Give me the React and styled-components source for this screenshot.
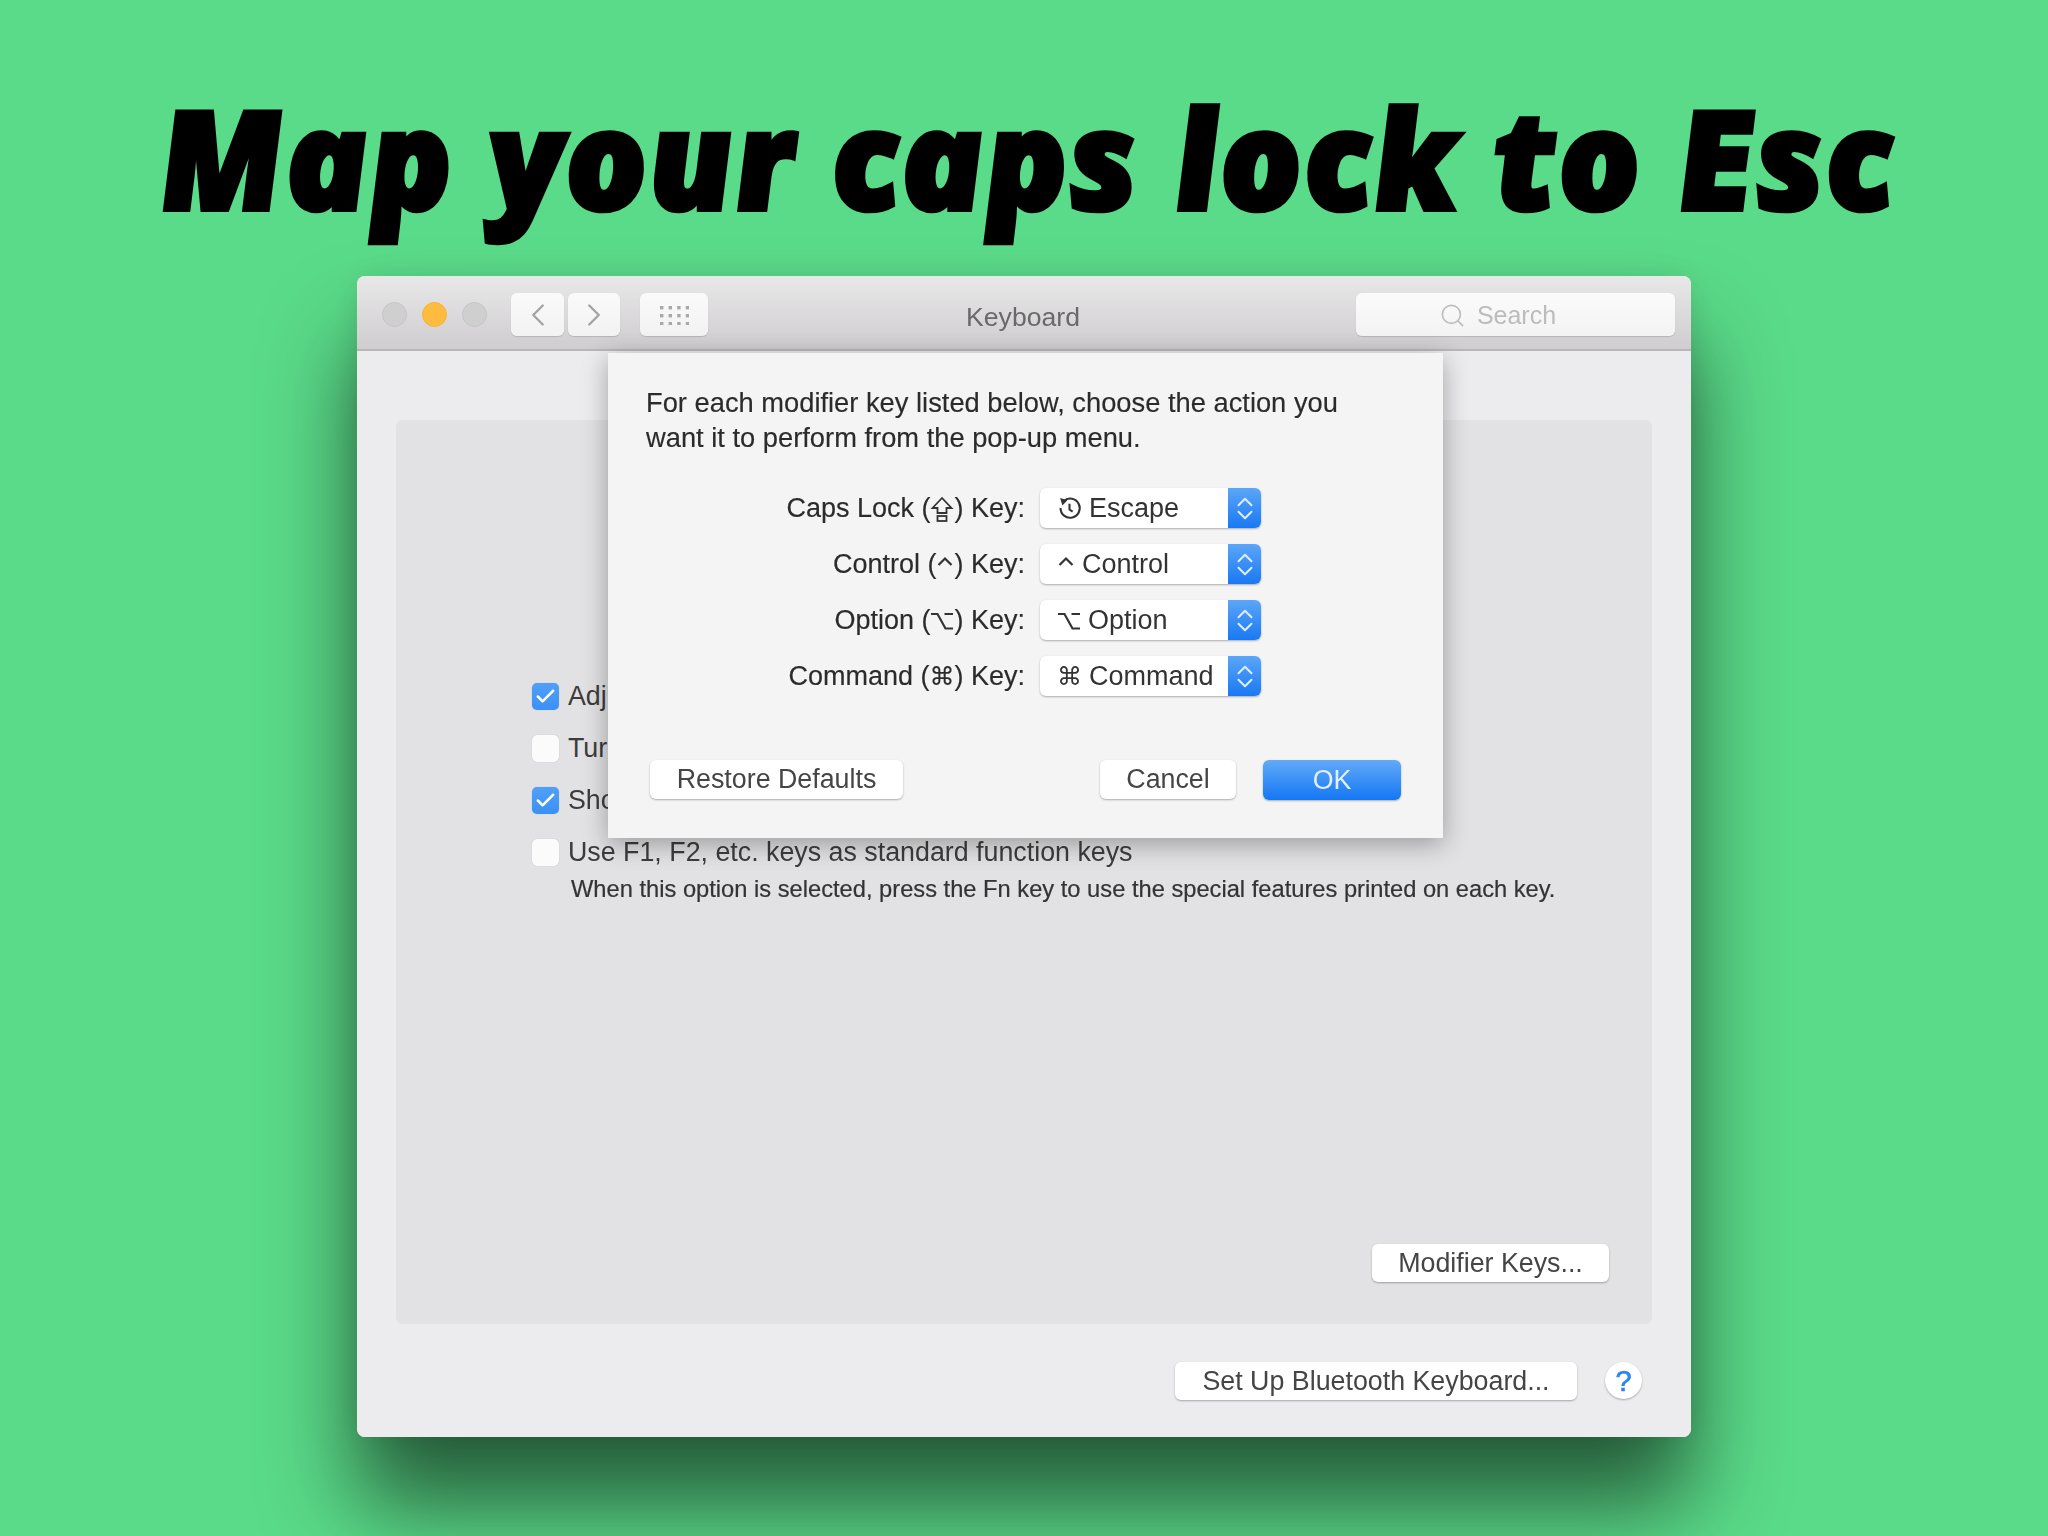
import React from "react";
import styled, { createGlobalStyle } from "styled-components";
import { ChevronLeft, ChevronRight, ChevronUp, ChevronDown, Search, Check } from "lucide-react";

const GlobalStyle = createGlobalStyle`
  html, body { margin: 0; padding: 0; background: #5adb89; }
  * { box-sizing: border-box; }
`;

const Page = styled.div`
  width: 2048px;
  height: 1536px;
  overflow: hidden;
  background: #5adb89;
  display: flex;
  flex-direction: column;
  align-items: flex-start;
  font-family: "Liberation Sans", Arial, sans-serif;
`;

const Title = styled.h1`
  margin: 0;
  width: 2048px;
  height: 276px;
  padding-top: 67px;
  text-align: center;
  color: #000;
  font-family: "Open Sans", sans-serif;
  font-weight: 800;
  font-style: italic;
  font-size: 138px;
  line-height: 178px;
  letter-spacing: 0.2px;
  -webkit-text-stroke: 4px #000;
  white-space: nowrap;
  transform: skewX(5deg);
`;

const Window = styled.div`
  position: relative;
  margin-left: 357px;
  width: 1334px;
  height: 1161px;
  border-radius: 8px;
  display: flex;
  flex-direction: column;
  background: #ededee;
  box-shadow: 0 68px 90px rgba(0, 0, 0, 0.58), 0 0 30px rgba(0, 0, 0, 0.1);
  filter: blur(0.5px);
`;

const TitleBar = styled.div`
  position: relative;
  height: 75px;
  flex: none;
  display: flex;
  align-items: center;
  padding: 4px 16px 0 25px;
  border-radius: 8px 8px 0 0;
  background: linear-gradient(#e9e8e9, #cfcdcf);
  border-bottom: 2px solid #b9b7b9;
`;

const Light = styled.span`
  width: 25px;
  height: 25px;
  border-radius: 50%;
  margin-right: 15px;
  background: ${(p) => (p.$on ? "#fdbc40" : "#d0cfd0")};
  border: 1px solid ${(p) => (p.$on ? "#f5b435" : "#c6c5c6")};
`;

const ToolButton = styled.div`
  height: 43px;
  width: ${(p) => p.$w}px;
  margin-left: ${(p) => p.$ml}px;
  border-radius: 6px;
  display: flex;
  align-items: center;
  justify-content: center;
  color: #a3a3a3;
  background: linear-gradient(#fafafa, #f2f2f3);
  box-shadow: 0 1px 1px rgba(0, 0, 0, 0.14);
`;

const WindowName = styled.div`
  position: absolute;
  left: 0;
  right: 0;
  top: 23px;
  padding-right: 2px;
  text-align: center;
  color: #6a696a;
  font-size: 26.6px;
  line-height: 36px;
`;

const SearchField = styled.div`
  margin-left: auto;
  width: 319px;
  height: 43px;
  padding-top: 1px;
  border-radius: 6px;
  display: flex;
  align-items: center;
  justify-content: center;
  gap: 11px;
  padding-right: 36px;
  color: #bdbcbd;
  font-size: 25px;
  background: linear-gradient(#fbfbfb, #f3f3f4);
  box-shadow: 0 1px 1px rgba(0, 0, 0, 0.14);
`;

const Body = styled.div`
  flex: 1;
  display: flex;
  flex-direction: column;
  padding: 69px 39px 0;
  border-radius: 0 0 8px 8px;
  background: #ecebed;
`;

const Panel = styled.div`
  flex: 1;
  display: flex;
  flex-direction: column;
  padding: 262px 43px 42px 136px;
  border-radius: 6px;
  background: #e2e1e3;
`;

const OptionRow = styled.div`
  display: flex;
  align-items: center;
  gap: 9px;
  height: 28px;
  margin-bottom: 24px;
  color: #3c3c3c;
  font-size: 26.8px;
  white-space: nowrap;
`;

const Box = styled.span`
  width: 27px;
  height: 27px;
  flex: none;
  border-radius: 5px;
  display: flex;
  align-items: center;
  justify-content: center;
  color: #fff;
  background: ${(p) => (p.$checked ? "linear-gradient(#50a0f8, #3a90f6)" : "#fbfbfb")};
  box-shadow: 0 0 1px rgba(0, 0, 0, 0.25);
`;

const OptionNote = styled.div`
  margin: -15px 0 0 39px;
  color: #333;
  font-size: 23.7px;
  line-height: 28px;
  white-space: nowrap;
  -webkit-text-stroke: 0.2px #333;
`;

const PushButton = styled.button`
  height: ${(p) => p.$h || 38}px;
  width: ${(p) => p.$w}px;
  padding: 0;
  border: 0;
  border-radius: 6px;
  color: #454545;
  font-family: inherit;
  font-size: 26.8px;
  background: #fff;
  box-shadow: 0 1px 2px rgba(0, 0, 0, 0.3);
`;

const DefaultButton = styled(PushButton)`
  color: #e4effd;
  background: linear-gradient(#62aaf9, #1477f3);
`;

const ModifierRow = styled.div`
  margin-top: auto;
  display: flex;
  justify-content: flex-end;
`;

const BottomRow = styled.div`
  flex: none;
  height: 113px;
  padding: 38px 10px 0 0;
  display: flex;
  justify-content: flex-end;
  align-items: flex-start;
`;

const HelpButton = styled.div`
  width: 37px;
  height: 37px;
  margin-left: 28px;
  padding-top: 1px;
  border-radius: 50%;
  display: flex;
  align-items: center;
  justify-content: center;
  color: #2a84f2;
  font-size: 29px;
  -webkit-text-stroke: 0.6px #2a84f2;
  background: #fff;
  box-shadow: 0 1px 2px rgba(0, 0, 0, 0.3);
`;

const Dialog = styled.div`
  position: absolute;
  left: 251px;
  top: 77px;
  width: 835px;
  height: 485px;
  display: flex;
  flex-direction: column;
  padding: 33px 42px 38px 38px;
  background: #f5f4f5;
  box-shadow: 0 6px 24px rgba(0, 0, 0, 0.32);
`;

const Intro = styled.p`
  margin: 0;
  color: #2b2b2b;
  font-size: 27.3px;
  line-height: 34.5px;
  white-space: nowrap;
  -webkit-text-stroke: 0.15px #2b2b2b;
`;

const KeyGrid = styled.div`
  margin-top: 33px;
  display: grid;
  grid-template-columns: 379px 221px;
  column-gap: 15px;
  row-gap: 16px;
  align-items: center;
`;

const KeyLabel = styled.div`
  display: flex;
  justify-content: flex-end;
  align-items: center;
  padding-top: 1px;
  color: #2b2b2b;
  font-size: 27px;
  white-space: pre;
  -webkit-text-stroke: 0.15px #2b2b2b;
`;

const KeySelect = styled.div`
  height: 40px;
  display: flex;
  align-items: center;
  border-radius: 6px;
  overflow: hidden;
  color: #333;
  font-size: 27px;
  background: #fff;
  box-shadow: 0 1px 2px rgba(0, 0, 0, 0.3);
`;

const SelectText = styled.span`
  flex: 1;
  display: flex;
  align-items: center;
  padding-top: 1px;
  padding-left: 17px;
  gap: 7px;
  white-space: nowrap;
`;

const Stepper = styled.span`
  width: 33px;
  height: 100%;
  flex: none;
  display: flex;
  flex-direction: column;
  align-items: center;
  justify-content: center;
  color: #dcebfd;
  background: linear-gradient(#5ba6f8, #1a78f2);

  svg + svg {
    margin-top: -13px;
  }
`;

const KeyGlyph = styled.span`
  font-family: "DejaVu Sans", sans-serif;
  font-size: 25px;
`;

const DialogFooter = styled.div`
  margin-top: auto;
  display: flex;
  gap: 27px;
  padding-left: 4px;
`;

const Spacer = styled.span`
  flex: 1;
`;

const GridIcon = () => (
  <svg width="30" height="20" viewBox="0 0 30 20" fill="#a8a8a8">
    {[1, 9, 17].map((y) =>
      [1, 9.6, 18.2, 26.8].map((x) => <rect key={x + "-" + y} x={x} y={y} width="3.4" height="3.4" />)
    )}
  </svg>
);

const EscapeIcon = () => (
  <svg width="25" height="25" viewBox="0 0 24 24" fill="none" stroke="#333" strokeWidth="2">
    <path d="M6.5 4.8A9.2 9.2 0 1 1 3.4 11.5" />
    <path d="M3 2l7 2-4.8 5z" fill="#333" stroke="none" />
    <path d="M12 7.5V13l3 2" />
  </svg>
);

const CapsIcon = () => (
  <svg width="24" height="26" viewBox="0 0 24 26" fill="none" stroke="#333" strokeWidth="1.8">
    <path d="M12 2 2.5 12H7.5V17H16.5V12H21.5Z" />
    <rect x="7.5" y="20" width="9" height="5" />
  </svg>
);

const ControlIcon = () => (
  <svg width="18" height="24" viewBox="0 0 18 24" fill="none" stroke="#333" strokeWidth="2.2">
    <path d="M2.5 12 9 5.5 15.5 12" />
  </svg>
);

const OptionIcon = () => (
  <svg width="24" height="24" viewBox="0 0 24 24" fill="none" stroke="#333" strokeWidth="2.2">
    <path d="M1 5H7.5L15.5 19.5H23M14.5 5H23" />
  </svg>
);

const keys = [
  { name: "Caps Lock", label: <CapsIcon />, glyph: <EscapeIcon />, value: "Escape" },
  { name: "Control", label: <ControlIcon />, glyph: <ControlIcon />, value: "Control" },
  { name: "Option", label: <OptionIcon />, glyph: <OptionIcon />, value: "Option" },
  { name: "Command", label: <KeyGlyph>⌘</KeyGlyph>, glyph: <KeyGlyph>⌘</KeyGlyph>, value: "Command" },
];

export default function App() {
  return (
    <Page>
      <GlobalStyle />
      <Title>Map your caps lock to Esc</Title>
      <Window>
        <TitleBar>
          <Light />
          <Light $on />
          <Light />
          <ToolButton $w={53} $ml={9}>
            <ChevronLeft size={38} strokeWidth={1.5} />
          </ToolButton>
          <ToolButton $w={52} $ml={4}>
            <ChevronRight size={38} strokeWidth={1.5} />
          </ToolButton>
          <ToolButton $w={68} $ml={20}>
            <GridIcon />
          </ToolButton>
          <WindowName>Keyboard</WindowName>
          <SearchField>
            <Search size={27} strokeWidth={1.5} />
            Search
          </SearchField>
        </TitleBar>
        <Body>
          <Panel>
            <OptionRow>
              <Box $checked>
                <Check size={23} strokeWidth={2.6} />
              </Box>
              Adj
            </OptionRow>
            <OptionRow>
              <Box />
              Tur
            </OptionRow>
            <OptionRow>
              <Box $checked>
                <Check size={23} strokeWidth={2.6} />
              </Box>
              Sho
            </OptionRow>
            <OptionRow>
              <Box />
              Use F1, F2, etc. keys as standard function keys
            </OptionRow>
            <OptionNote>When this option is selected, press the Fn key to use the special features printed on each key.</OptionNote>
            <ModifierRow>
              <PushButton $w={237}>Modifier Keys...</PushButton>
            </ModifierRow>
          </Panel>
          <BottomRow>
            <PushButton $w={402}>Set Up Bluetooth Keyboard...</PushButton>
            <HelpButton>?</HelpButton>
          </BottomRow>
        </Body>
        <Dialog>
          <Intro>
            For each modifier key listed below, choose the action you
            <br />
            want it to perform from the pop-up menu.
          </Intro>
          <KeyGrid>
            {keys.map((k) => (
              <React.Fragment key={k.value}>
                <KeyLabel>
                  {k.name} ({k.label}) Key:
                </KeyLabel>
                <KeySelect>
                  <SelectText>
                    {k.glyph}
                    {k.value}
                  </SelectText>
                  <Stepper>
                    <ChevronUp size={26} strokeWidth={1.9} />
                    <ChevronDown size={26} strokeWidth={1.9} />
                  </Stepper>
                </KeySelect>
              </React.Fragment>
            ))}
          </KeyGrid>
          <DialogFooter>
            <PushButton $w={253} $h={39}>Restore Defaults</PushButton>
            <Spacer />
            <PushButton $w={136} $h={39}>Cancel</PushButton>
            <DefaultButton $w={138} $h={40}>OK</DefaultButton>
          </DialogFooter>
        </Dialog>
      </Window>
    </Page>
  );
}
